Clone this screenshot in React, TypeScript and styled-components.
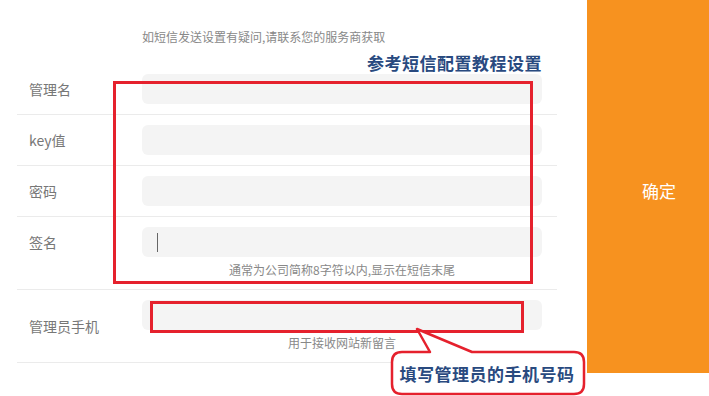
import styled, { createGlobalStyle } from "styled-components";

const GlobalStyle = createGlobalStyle`
  body {
    margin: 0;
    background: #fff;
    font-family: "Noto Sans CJK SC", "Noto Sans", sans-serif;
  }
`;

const Page = styled.div`
  position: relative;
  display: flex;
  width: 709px;
  height: 396px;
  overflow: hidden;
`;

const FormArea = styled.div`
  width: 540px;
  padding: 0 30px 0 17px;
`;

const TopHint = styled.p`
  margin: 0 0 19px;
  padding: 28px 0 0 125px;
  font-size: 12px;
  line-height: 17px;
  color: #888;
`;

const Row = styled.div`
  display: flex;
  padding: 10px 0;
  border-bottom: 1px solid #ebebeb;
`;

const Label = styled.div<{ $middle?: boolean }>`
  width: 113px;
  padding-left: 12px;
  align-self: ${(p) => (p.$middle ? "center" : "flex-start")};
  font-size: 14px;
  line-height: 30px;
  color: #777;
`;

const FieldCol = styled.div`
  width: 400px;
  display: flex;
  flex-direction: column;
`;

const Field = styled.div`
  height: 30px;
  border-radius: 6px;
  background: #f4f4f4;
  display: flex;
  align-items: center;
`;

const Caret = styled.span`
  width: 1px;
  height: 19px;
  margin-left: 15px;
  background: #666;
`;

const FieldHint = styled.div`
  margin-top: 4px;
  text-align: center;
  font-size: 12px;
  line-height: 18px;
  color: #888;
`;

const ConfirmPanel = styled.div`
  width: 122px;
  height: 373px;
  box-sizing: border-box;
  padding: 7px 0 0 55px;
  background: #f7921f;
  display: flex;
  align-items: center;
  font-size: 17px;
  color: #fff;
`;

const Note = styled.div`
  position: absolute;
  font-size: 17px;
  font-weight: 700;
  line-height: 20px;
  color: #294a7f;
  letter-spacing: 0.5px;
  white-space: nowrap;
`;

const Frame = styled.div<{ $w: number }>`
  position: absolute;
  box-sizing: border-box;
  border: ${(p) => p.$w}px solid #e5212d;
`;

const Bubble = styled.div`
  position: absolute;
  left: 385px;
  top: 322px;
  width: 205px;
  height: 75px;

  svg {
    position: absolute;
    inset: 0;
  }
`;

const BubbleText = styled.div`
  position: absolute;
  left: 7px;
  top: 30px;
  width: 190px;
  height: 42px;
  display: flex;
  align-items: center;
  justify-content: center;
  font-size: 17px;
  font-weight: 700;
  letter-spacing: 0.5px;
  color: #294a7f;
  white-space: nowrap;
`;

const rows = [
  { label: "管理名" },
  { label: "key值" },
  { label: "密码" },
  { label: "签名", caret: true, hint: "通常为公司简称8字符以内,显示在短信末尾" },
  { label: "管理员手机", middle: true, hint: "用于接收网站新留言" },
];

const App = () => {
  return (
    <Page>
      <GlobalStyle />
      <FormArea>
        <TopHint>如短信发送设置有疑问,请联系您的服务商获取</TopHint>
        {rows.map((r) => (
          <Row key={r.label}>
            <Label $middle={r.middle}>{r.label}</Label>
            <FieldCol>
              <Field>{r.caret && <Caret />}</Field>
              {r.hint && <FieldHint>{r.hint}</FieldHint>}
            </FieldCol>
          </Row>
        ))}
      </FormArea>

      <ConfirmPanel>确定</ConfirmPanel>

      {/* annotations */}
      <Note style={{ left: 367, top: 53 }}>参考短信配置教程设置</Note>
      <Frame $w={3} style={{ left: 113, top: 81, width: 420, height: 203 }} />
      <Frame $w={3} style={{ left: 150, top: 301, width: 374, height: 32 }} />
      <Bubble>
        <svg width="205" height="75" viewBox="0 0 205 75">
          <path
            d="M17 30 H45 L32 7 L87 30 H189 Q199 30 199 40 V62 Q199 72 189 72 H17 Q7 72 7 62 V40 Q7 30 17 30 Z"
            fill="#fff"
            stroke="#e5212d"
            strokeWidth="2.5"
            strokeLinejoin="round"
          />
        </svg>
        <BubbleText>填写管理员的手机号码</BubbleText>
      </Bubble>
    </Page>
  );
};

export default App;
